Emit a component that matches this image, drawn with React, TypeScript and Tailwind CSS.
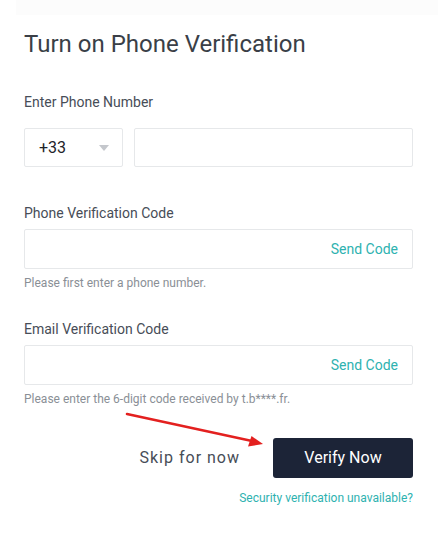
import React from "react";

function Field({ label, hint }: { label: string; hint: string }) {
  return (
    <div className="flex flex-col">
      <label className="text-[14px] leading-[18px] text-[#474d57]">{label}</label>
      <div className="mt-[7px] h-[40px] flex items-center justify-end border border-[#e6e8ea] rounded-[2px] pr-[14px]">
        <span className="text-[14px] text-[#2eb2b0]">Send Code</span>
      </div>
      <p className="mt-[6px] text-[12px] leading-[16px] text-[#8a8f96]">{hint}</p>
    </div>
  );
}

export default function App() {
  return (
    <div
      className="relative w-[439px] h-[533px] bg-white overflow-hidden"
      style={{ fontFamily: "Roboto, 'Liberation Sans', sans-serif" }}
    >
      <div className="ml-[16px] mr-[1px] h-[15px] bg-[#fcfcfc]" />
      <div className="pl-[24px] pr-[26px]">
        <h1 className="mt-[13px] text-[24px] leading-[32px] text-[#3a3f47]">
          Turn on Phone Verification
        </h1>

        <div className="mt-[33px] flex flex-col">
          <label className="text-[14px] leading-[18px] text-[#474d57]">Enter Phone Number</label>
          <div className="mt-[17px] flex gap-[11px]">
            <div className="w-[99px] h-[39px] flex items-center justify-between pl-[14px] pr-[13px] border border-[#e6e8ea] rounded-[2px]">
              <span className="text-[16px] text-[#1e2329]">+33</span>
              <svg width="10" height="6" viewBox="0 0 10 6">
                <path d="M0 0 H10 L5 6 Z" fill="#c4c7cc" />
              </svg>
            </div>
            <div className="flex-1 h-[39px] border border-[#e6e8ea] rounded-[2px]" />
          </div>
        </div>

        <div className="mt-[37px]">
          <Field label="Phone Verification Code" hint="Please first enter a phone number." />
        </div>
        <div className="mt-[29px]">
          <Field label="Email Verification Code" hint="Please enter the 6-digit code received by t.b****.fr." />
        </div>

        <div className="mt-[31px] flex items-center justify-end">
          <span className="mr-[33px] text-[16px] tracking-[1px] text-[#474d57]">Skip for now</span>
          <button className="w-[140px] h-[40px] rounded-[3px] bg-[#1c2437] text-white text-[16px]">
            Verify Now
          </button>
        </div>
        <div className="mt-[11px] flex justify-end">
          <span className="text-[12px] text-[#2eb2b0]">Security verification unavailable?</span>
        </div>
      </div>

      <svg className="absolute left-0 top-0" width="439" height="533" viewBox="0 0 439 533">
        <line x1="127" y1="414" x2="252" y2="441" stroke="#e3201f" strokeWidth="2.6" strokeLinecap="round" />
        <path d="M263 444 L248 446.5 L251.5 436 Z" fill="#e3201f" />
      </svg>
    </div>
  );
}
